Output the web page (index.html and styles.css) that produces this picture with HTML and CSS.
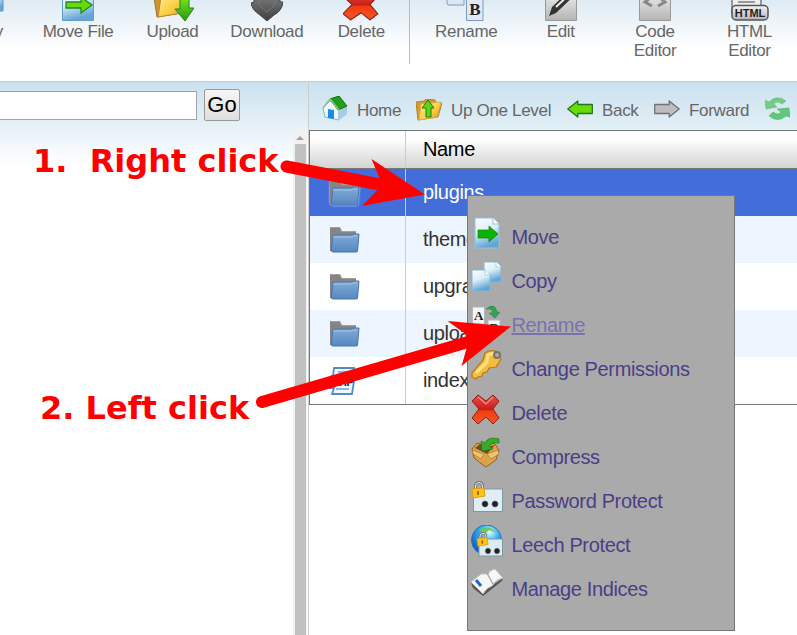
FILE: index.html
```html
<!DOCTYPE html>
<html lang="en">
<head>
<meta charset="utf-8">
<title>File Manager</title>
<link rel="stylesheet" href="styles.css">
</head>
<body>
<svg class="defs" width="0" height="0" aria-hidden="true">
  <defs>
    <linearGradient id="page" x1="0" y1="0" x2="0.300" y2="1"><stop offset="0" stop-color="#fafdff"/><stop offset=".5" stop-color="#dceff8"/><stop offset="1" stop-color="#62a5d6"/></linearGradient>
    <linearGradient id="blue" x1="0" y1="0" x2="0" y2="1"><stop offset="0" stop-color="#83abd8"/><stop offset="1" stop-color="#5687c2"/></linearGradient>
    <linearGradient id="grey" x1="0" y1="0" x2="0" y2="1"><stop offset="0" stop-color="#f4f4f4"/><stop offset="1" stop-color="#b4b4b4"/></linearGradient>
    <linearGradient id="dark" x1="0" y1="0" x2="0" y2="1"><stop offset="0" stop-color="#8a8a8a"/><stop offset="1" stop-color="#3e3e3e"/></linearGradient>
    <linearGradient id="gold" x1="0" y1="0" x2="1" y2="1"><stop offset="0" stop-color="#fff2a0"/><stop offset=".6" stop-color="#f9cb3e"/><stop offset="1" stop-color="#d28e18"/></linearGradient>
    <linearGradient id="red" x1="0" y1="0" x2="0" y2="1"><stop offset="0" stop-color="#e4524e"/><stop offset=".5" stop-color="#c81e18"/><stop offset=".55" stop-color="#f53c0c"/><stop offset="1" stop-color="#ed5930"/></linearGradient>
    <linearGradient id="green" x1="0" y1="0" x2="0" y2="1"><stop offset="0" stop-color="#74e019"/><stop offset="1" stop-color="#249816"/></linearGradient>
    <radialGradient id="globe" cx=".6" cy=".25" r=".8"><stop offset="0" stop-color="#d5fbff"/><stop offset=".4" stop-color="#39aaf0"/><stop offset="1" stop-color="#0649b8"/></radialGradient>
    <symbol id="folder" viewBox="0 0 32 32">
      <path d="M2 3h10l2 4h14v7H7L4 27H2Z" fill="#858585"/>
      <path d="M2.500 3.500h9l2 4h14" fill="none" stroke="#a8a29b"/>
      <path d="M5 12q0-1 1.500-1h18l2-1h4.500l-1.500 17q0 1-1.500 1H5q-2 0-1.700-2Z" fill="url(#blue)" stroke="#4676ad"/>
      <path d="M5 13h18l2-1h4" fill="none" stroke="#a5c4e6"/>
    </symbol>
    <symbol id="cross" viewBox="1 0 28 31" preserveAspectRatio="none">
      <path d="M7 1l8 6 7-6 6 6-6 8 6 9-6 6-7-7-8 7-6-6 7-9-7-8Z" fill="url(#red)" stroke="#961b12" stroke-linejoin="round"/>
      <path d="M7 3l8 7 7-7" fill="none" stroke="#f6908a" stroke-width="1.200"/>
    </symbol>
    <symbol id="lock" viewBox="0 0 16 18">
      <path d="M4.500 9V5q0-3.500 3.500-3.500T11.500 5v4" fill="none" stroke="#777" stroke-width="3"/>
      <path d="M4.500 9V5q0-3.500 3.500-3.500T11.500 5v4" fill="none" stroke="#eee"/>
      <path d="M1 8l12-1 1 8-12 2Z" fill="#ffc51b" stroke="#e39b0a"/>
      <path d="M7 10v4" stroke="#a66b00" stroke-width="2"/>
    </symbol>
  </defs>
</svg>

<div class="app">
  <nav class="toolbar">
    <div class="tool"><svg class="icon wide" viewBox="0 0 40 32"><path d="M2 0h37v22H2z" fill="url(#page)" stroke="#5b94c9"/></svg>Copy</div>
    <div class="tool"><svg class="icon" viewBox="0 0 32 32"><path d="M.5 0h31v31.500H.5Z" fill="url(#page)" stroke="#629bd0"/><path d="M4 13h15V8l11 8-11 8v-5H4Z" fill="#69d90b" stroke="#1c8c1d" stroke-width="1.300"/></svg>Move File</div>
    <div class="tool"><svg class="icon wide upload" viewBox="0 0 40 32"><path d="M0 8l9-2 4-3 18 4-4 17-24 4Z" fill="#ca9634" stroke="#a86f20"/><path d="M7 8l25-4-4 20-24 4Z" fill="url(#gold)" stroke="#b8872d"/><path d="M26 10h9v9h5L31 32 21 20h5Z" fill="url(#green)" stroke="#238522"/></svg>Upload</div>
    <div class="tool"><svg class="icon" viewBox="0 0 32 32"><path d="M3 0h26v13h3q-1 9-9 13l-7 6-7-6Q1 21 0 14l3-1Z" fill="url(#dark)" stroke="#444"/><path d="M8 2v14l8 7 8-7V2" fill="none" stroke="#777"/></svg>Download</div>
    <div class="tool"><svg class="icon cross-icon"><use href="#cross"/></svg>Delete</div>
    <div class="tool first"><svg class="icon wide" viewBox="0 0 40 32"><path d="M1 0h17v16H3q-2 0-2-2z" fill="#dce7f6" stroke="#8498ba"/><path d="M20.500 8h16.500v23.500H20.500z" fill="#e2e8f4" stroke="#7f9ac0"/><text x="29" y="26" class="letter" text-anchor="middle">B</text></svg>Rename</div>
    <div class="tool"><svg class="icon" viewBox="0 0 32 32"><path d="M.5 0h31v31.500H.5Z" fill="url(#grey)" stroke="#999"/><path d="M4 27l3-9L27-1l5 5-21 20Z" fill="#333"/><path d="M11 18L28 2" stroke="#eee" stroke-width="2"/></svg>Edit</div>
    <div class="tool"><svg class="icon" viewBox="0 0 32 32"><path d="M.5 0h31v31.500H.5Z" fill="url(#grey)" stroke="#999"/><path d="M12 8l-6 5 7 4M20 8l6 5-7 4" fill="none" stroke="#888" stroke-width="3"/></svg>Code Editor</div>
    <div class="tool"><svg class="icon wide" viewBox="0 0 40 32"><path d="M3 0h29v25H3Z" fill="#eee" stroke="#444"/><path d="M9 10h17M9 13h17" stroke="#444"/><rect x="3" y="16.500" width="36" height="14.500" rx="4" fill="url(#grey)" stroke="#555" stroke-width="1.500"/><text x="21" y="28" class="html" text-anchor="middle">HTML</text></svg>HTML Editor</div>
  </nav>

  <div class="main">
    <aside class="side">
      <form class="search"><input type="text" aria-label="Path"><button type="button">Go</button></form>
      <div class="scroll"><i></i><b></b></div>
    </aside>
    <section class="files">
      <div class="nav">
        <span class="home"><svg width="26" height="26" viewBox="0 0 26 26"><path d="M1 12l7-7 9 8v11L3 21Z" fill="#edf7ff" stroke="#82b4d8"/><path d="M16 13l9-3v8l-9 7Z" fill="#a7cbe3"/><path d="M8 3l9-3 8 10-9 4Z" fill="#219f18" stroke="#117512"/><path d="M1 12l7-9 9 11" fill="none" stroke="#8fc487" stroke-width="1.500"/><path d="M6 13l6 1v9l-6-1Z" fill="#168ee8"/></svg>Home</span>
        <span class="up"><svg width="26" height="22" viewBox="0 0 26 22"><path d="M0 3l8-1 2-2 9 1 1 5 6-2-4 14L2 21Z" fill="#d79b2d" stroke="#b48231"/><path d="M5 5l20-2-4 15-18 3Z" fill="url(#gold)" stroke="#dfb13c"/><path d="M12 1l6 8h-3v9h-5v-9H6Z" fill="#5ed617" stroke="#257a16"/></svg>Up One Level</span>
        <span class="back"><svg width="26" height="18" viewBox="0 0 26 18"><path d="M.8 9l10-8v3.500h14.500v9H10.800V17Z" fill="#68dc0b" stroke="#247519" stroke-width="1.300" stroke-linejoin="round"/></svg>Back</span>
        <span class="forward"><svg width="26" height="18" viewBox="0 0 26 18"><path d="M25.200 9l-10-8v3.500H.7v9h14.500V17Z" fill="#bdbdbd" stroke="#707070" stroke-width="1.300" stroke-linejoin="round"/></svg>Forward</span>
        <span><svg width="25" height="23" viewBox="0 0 25 23"><path d="M0 3l4 2Q12-3 21 4l-4 3Q12 3 9 7l3 3-11 2Z" fill="#73cc85" stroke="#5ab46f" stroke-width=".5"/><path d="M25 20l-4-1q-8 7-17 0l4-4q5 4 8 0l-4-3 12-1Z" fill="#61c77b" stroke="#40a862" stroke-width=".5"/></svg></span>
      </div>
      <div class="table">
        <div class="row head"><div class="pic"></div><div class="name">Name</div></div>
        <div class="row selected"><div class="pic"><svg><use href="#folder"/></svg></div><div class="name">plugins</div></div>
        <div class="row alt"><div class="pic"><svg><use href="#folder"/></svg></div><div class="name">themes</div></div>
        <div class="row"><div class="pic"><svg><use href="#folder"/></svg></div><div class="name">upgrade</div></div>
        <div class="row alt"><div class="pic"><svg><use href="#folder"/></svg></div><div class="name">uploads</div></div>
        <div class="row"><div class="pic"><svg viewBox="0 0 32 32"><path d="M6 3h20l-1 7h2l-3 19H4l2-6H2l2-12h1Z" fill="#eff8ff" stroke="#528bc5" stroke-width="1.800"/><path d="M8 24h13M10 7h12" stroke="#6aa7df" stroke-width="1.500"/><text x="4" y="21" class="php">PHP</text></svg></div><div class="name">index.php</div></div>
      </div>
    </section>
  </div>

  <ul class="menu">
    <li><svg viewBox="0 0 32 32"><path d="M4 1h18l6 6v24H4Z" fill="url(#page)" stroke="#94c1df"/><path d="M22 1v6h6" fill="#fff" stroke="#9dbad0"/><path d="M7 13h11V9l9 8-9 8v-4H7Z" fill="#0bb303" stroke="#08820a" stroke-width=".7"/></svg>Move</li>
    <li><svg viewBox="0 0 32 32"><path d="M13 1h13l4 4v16H13Z" fill="url(#page)" stroke="#81b5db"/><path d="M25 1v5h5" fill="#fff" stroke="#afd0e5"/><path d="M1 9h13l5 5v16H1Z" fill="url(#page)" stroke="#81b5db"/><path d="M14 9v5h5" fill="#fff" stroke="#afd0e5"/></svg>Copy</li>
    <li class="hover"><svg viewBox="0 0 32 32"><path d="M1.500 2h12v17h-12zM17 15h12v15H17z" fill="#f3f5fa" stroke="#b5b5b5"/><text x="7.500" y="15" class="a" text-anchor="middle">A</text><text x="23" y="27" class="a" text-anchor="middle">B</text><path d="M15 4q9-7 11 3h3l-5 6-6-5h4q-1-5-7-4Z" fill="#31a451" stroke="#20783b" stroke-width=".5"/></svg>Rename</li>
    <li><svg viewBox="0 0 32 32"><path d="M12 11l2-7q8-5 14 1l2 5-5 8-7 1-2 4-4 1-1 3-4 1-2 2-4-2V24Z" fill="#f6bd3c" stroke="#b8771c" stroke-width="1.200"/><path d="M5 24l11-11 1-7 6-2" fill="none" stroke="#ffe382" stroke-width="3"/><circle cx="26" cy="6" r="3" fill="#aaa" stroke="#78746d" stroke-width="2"/></svg>Change Permissions</li>
    <li><svg class="small-cross"><use href="#cross"/></svg>Delete</li>
    <li><svg viewBox="0 0 32 32"><path d="M1 12l5-6 9 3 8-3 5 7-3 10-10 7-12-9Z" fill="#dba44c" stroke="#946022"/><path d="M4 11l5-4 7 3 8-2-8 9Z" fill="#744a20"/><path d="M1 13l12 4-3 5-8-5ZM16 17l11-4 1 4-8 5Z" fill="#f0c477" stroke="#a87030" stroke-width=".7"/><path d="M28 2q-11-3-14 4l-4-2 1 10 11-2-4-3q3-4 10-3Z" fill="#35ad28" stroke="#24791b" stroke-width=".7"/></svg>Compress</li>
    <li><svg viewBox="0 0 32 32"><rect x="2.500" y="8" width="29" height="22.500" fill="#dfeef5" stroke="#8098a4"/><g fill="#222" stroke="#667" stroke-width=".8" stroke-dasharray="1.500 1"><circle cx="14" cy="23" r="3"/><circle cx="24" cy="23" r="3"/></g><use href="#lock" width="16" height="18"/></svg>Password Protect</li>
    <li><svg viewBox="0 0 32 32"><circle cx="15.500" cy="15" r="15" fill="url(#globe)" stroke="#2075bc"/><path d="M8 5q9-6 17 2l-7-2-4 3Z" fill="#6acb55"/><rect x="8" y="14" width="23.500" height="17" fill="#d9ecf5" stroke="#8098a4"/><g fill="#222" stroke="#667" stroke-width=".8" stroke-dasharray="1.500 1"><circle cx="17" cy="26" r="2.700"/><circle cx="26" cy="26" r="2.700"/></g><use href="#lock" x="5" y="7" width="14" height="15"/></svg>Leech Protect</li>
    <li><svg viewBox="0 0 32 32"><path d="M0 14l2 5 10 8 19-15 1-3-20 14Z" fill="#555"/><path d="M0 13L10 5q5-1 7 1 1-5 7-6l8 9q-8 2-11 8-5 1-9 8Z" fill="#f7f7f7" stroke="#bbb"/><path d="M17 6l5 9" stroke="#aaa" stroke-width="1.500"/><path d="M5 11l5 6" stroke="#2662d0" stroke-width="3"/></svg>Manage Indices</li>
  </ul>

  <p class="note right-click">1.&nbsp; Right click</p>
  <p class="note left-click">2. Left click</p>
  <svg class="arrows" viewBox="0 0 797 635" width="797" height="635">
    <path d="M286.500 166.500L380 184.500M262 402L480 338.500" fill="none" stroke="#f00" stroke-width="12" stroke-linecap="round"/>
    <path d="M425 194.500L371.500 159l8 19-3 13-14.500 15ZM511 326.500L447.500 321l18 13 1.500 13-5.500 19Z" fill="#f00"/>
  </svg>
</div>
</body>
</html>
```
FILE: styles.css
```css
* { box-sizing: border-box; }
body { margin: 0; overflow: hidden; background: #fff; font-family: "Liberation Sans", Arial, sans-serif; }
.defs { position: absolute; }
.app { position: relative; width: 797px; height: 635px; overflow: hidden; display: flex; flex-direction: column; }
.toolbar { flex: none; height: 82px; display: flex; border-bottom: 1px solid #c3cacd; background: linear-gradient(#deebf4, #fff 48px); color: #666; font-size: 17px; letter-spacing: -.32px; line-height: 19px; text-align: center; }
.tool { flex: none; width: 94.400px; height: 64px; padding: 0 15px; display: flex; flex-direction: column; align-items: center; white-space: nowrap; }
.tool:first-child { margin-left: -63.500px; }
.tool:nth-last-child(-n+2) { white-space: normal; }
.tool.first { width: 104.400px; padding-left: 24px; border-left: 1px solid #bbb; margin-left: .6px; }
.tool .icon { flex: none; width: 32px; height: 32px; margin: -11px 0 1px; letter-spacing: 0; }
.tool .wide { width: 40px; }
.tool .upload { margin-left: 3px; }
.tool .cross-icon { width: 36px; }
.letter { font: bold 17px "Liberation Serif", serif; fill: #222; }
.html { font: bold 11px "Liberation Sans", sans-serif; fill: #222; }
.main { flex: 1; display: flex; min-height: 0; }
.side { flex: none; width: 309px; border-right: 1px solid #ccc; background: linear-gradient(#cbe1ef, #fff 84px); display: flex; flex-direction: column; }
.search { display: flex; height: 48px; margin: 0; padding-top: 7px; gap: 7px; }
.search input { width: 198px; height: 29px; margin: 2px 0 0 -1px; border: 1px solid #a3a3a3; background: #fff; padding: 0; }
.search button { width: 36px; height: 32px; padding: 0; border: 1px solid #999; border-radius: 2px; background: linear-gradient(#f6f6f6, #dedede); font: 22px "Liberation Sans", sans-serif; color: #000; }
.scroll { flex: 1; width: 14px; margin-left: 293px; background: #f1f1f1; display: flex; flex-direction: column; align-items: center; }
.scroll i { width: 0; height: 0; margin: 6px 0 4px; border: 4px solid transparent; border-top: 0; border-bottom-color: #a2a2a2; }
.scroll b { width: 11px; flex: 1; background: #c1c1c1; }
.files { flex: 1; display: flex; flex-direction: column; min-width: 0; }
.nav { flex: none; height: 48px; display: flex; align-items: center; padding: 9px 0 0 13px; background: linear-gradient(#cbe1ef, #e2eff6); color: #666; font-size: 17px; letter-spacing: -.32px; white-space: nowrap; }
.nav span { display: flex; align-items: center; flex: none; line-height: 22px; }
.nav svg { flex: none; margin: -4px 9px 0 0; }
.home { width: 94px; }
.up { width: 151px; }
.nav .up svg { margin-top: -1px; }
.back { width: 87px; }
.forward { width: 111px; }
.table { border: 1px solid #777; border-right: 0; color: #333; font-size: 20px; letter-spacing: -.35px; }
.row { display: flex; height: 47px; background: #fff; }
.alt { background: #edf5fe; }
.selected { background: #436eda; color: #fff; }
.head { height: 38px; border-bottom: 1px solid #777; background: linear-gradient(#fff 20%, #d6d6d6 95%); color: #000; }
.pic { flex: none; width: 96px; border-right: 1px solid #ccc; padding: 8px 0 0 18px; }
.pic svg { display: block; width: 32px; height: 32px; overflow: visible; }
.selected .pic svg { filter: drop-shadow(0 0 1px #dce6ff); }
.name { padding-left: 17px; line-height: 46px; }
.head .name { line-height: 36px; }
.php { font: bold 11px "Liberation Sans", sans-serif; fill: #222; }
.menu { position: absolute; left: 467px; top: 195px; width: 268px; height: 436px; margin: 0; padding: 19px 3px; list-style: none; border: 1px solid #777; background: #aaa; color: #4a3e88; font-size: 20px; letter-spacing: -.36px; }
.menu li { height: 44px; display: flex; align-items: center; line-height: 44px; gap: 8.500px; }
.menu svg { width: 32px; height: 32px; margin-top: -8px; }
.menu .small-cross { width: 28px; margin: -8px 3px 0 1px; height: 31px; }
.menu .hover { color: #7972ae; text-decoration: underline; }
.a { font: bold 13px "Liberation Serif", serif; fill: #222; }
.note { position: absolute; margin: 0; color: #f00; font: bold 32px/38px "DejaVu Sans", sans-serif; white-space: pre; }
.right-click { left: 33px; top: 142px; }
.left-click { left: 40px; top: 389px; }
.arrows { position: absolute; left: 0; top: 0; }
```
